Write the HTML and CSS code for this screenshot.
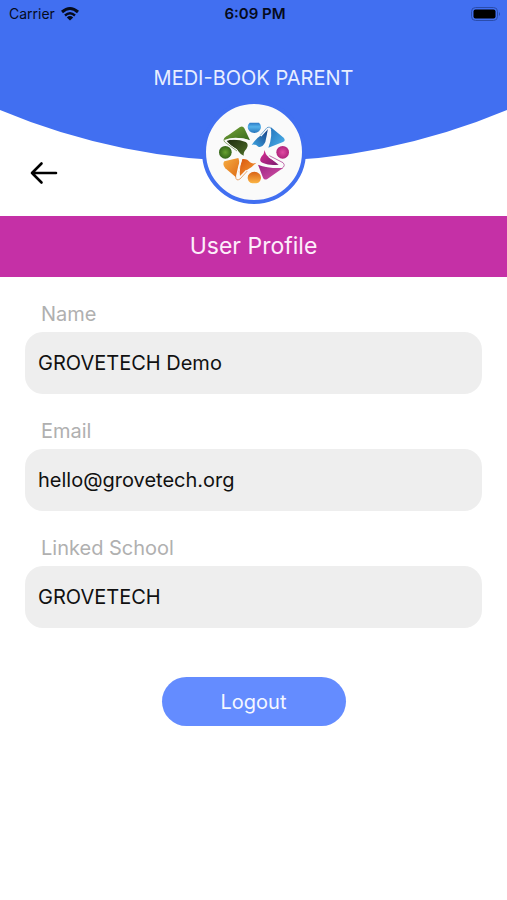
FILE: index.html
```
<!DOCTYPE html>
<html lang="en">
<head>
  <meta charset="UTF-8">
  <meta name="viewport" content="width=device-width, initial-scale=1.0">
  <title>User Profile</title>
  <link rel="stylesheet" href="styles.css">
</head>
<body>
  <header class="header">
    <svg class="curve" viewBox="0 0 507 161" preserveAspectRatio="none" aria-hidden="true">
      <path d="M0 0H507V110A655 655 0 0 1 0 110Z" fill="#416ff1"/>
    </svg>

    <div class="status-bar">
      <div class="carrier">
        <span>Carrier</span>
        <svg width="20" height="16" viewBox="0 0 20 16" aria-hidden="true">
          <g fill="none" stroke="#050b1c" stroke-width="3">
            <path d="M2 6Q10 -1 18 6"/>
            <path d="M5 9.5Q10 5 15 9.5" stroke-width="2.4"/>
          </g>
          <path d="M10 14.5L6.8 11.4Q10 8.8 13.2 11.4Z" fill="#050b1c"/>
        </svg>
      </div>
      <div class="time">6:09 PM</div>
      <svg class="battery" width="30" height="14" viewBox="0 0 30 14" aria-hidden="true">
        <rect x="0.5" y="0.5" width="26" height="13" rx="4" fill="none" stroke="#2a4cab"/>
        <rect x="2.5" y="2.5" width="22" height="9" rx="2" fill="#000"/>
        <path d="M28 5Q30 7 28 9Z" fill="#2a4cab"/>
      </svg>
    </div>

    <div class="app-name">MEDI-BOOK PARENT</div>

    <div class="nav-row">
      <button class="back" type="button" aria-label="Back">
        <svg width="28" height="24" viewBox="0 0 28 24" aria-hidden="true">
          <path d="M26 12H2M11.5 2.5L2 12L11.5 21.5" fill="none" stroke="#000" stroke-width="2.6" stroke-linecap="round" stroke-linejoin="round"/>
        </svg>
      </button>
      <div class="logo">
        <svg width="96" height="96" viewBox="36 35 288 288" role="img" aria-label="School logo">
          <defs>
            <linearGradient id="green" x1="0" y1="0" x2="1" y2="1">
              <stop offset="0" stop-color="#7aa63a"/>
              <stop offset="1" stop-color="#34691a"/>
            </linearGradient>
            <linearGradient id="darkGreen" x1="0" y1="0" x2="1" y2="1">
              <stop offset="0" stop-color="#1d2a0d"/>
              <stop offset="1" stop-color="#4f6f2a"/>
            </linearGradient>
            <linearGradient id="blue" x1="0" y1="0" x2="1" y2="1">
              <stop offset="0" stop-color="#1f6fb8"/>
              <stop offset="1" stop-color="#4fb4ec"/>
            </linearGradient>
            <linearGradient id="darkBlue" x1="1" y1="0" x2="0" y2="1">
              <stop offset="0" stop-color="#143a80"/>
              <stop offset="1" stop-color="#3fa9e6"/>
            </linearGradient>
            <linearGradient id="pink" x1="0" y1="0" x2="1" y2="1">
              <stop offset="0" stop-color="#9c2183"/>
              <stop offset="1" stop-color="#d355a6"/>
            </linearGradient>
            <linearGradient id="darkPink" x1="0" y1="0" x2="1" y2="1">
              <stop offset="0" stop-color="#dd2c93"/>
              <stop offset="1" stop-color="#7c1d70"/>
            </linearGradient>
            <linearGradient id="orange" x1="0" y1="0" x2="1" y2="1">
              <stop offset="0" stop-color="#f6ad42"/>
              <stop offset="1" stop-color="#de6a14"/>
            </linearGradient>
            <linearGradient id="darkOrange" x1="0" y1="0" x2="1" y2="1">
              <stop offset="0" stop-color="#d9560d"/>
              <stop offset="1" stop-color="#f7a13a"/>
            </linearGradient>
            <linearGradient id="blueHead" x1="0" y1="0" x2="0" y2="1">
              <stop offset="0" stop-color="#2b78c4"/>
              <stop offset="0.4" stop-color="#55b2ea"/>
              <stop offset="1" stop-color="#2876bd"/>
            </linearGradient>
            <linearGradient id="orangeHead" x1="0" y1="0" x2="0" y2="1">
              <stop offset="0" stop-color="#da6417"/>
              <stop offset="1" stop-color="#fbb545"/>
            </linearGradient>
            <radialGradient id="greenHead">
              <stop offset="0" stop-color="#69a331"/>
              <stop offset="1" stop-color="#35661a"/>
            </radialGradient>
            <radialGradient id="pinkHead">
              <stop offset="0" stop-color="#e04ba2"/>
              <stop offset="1" stop-color="#b0247c"/>
            </radialGradient>
          </defs>

          <!-- heads -->
          <path d="M167 91H195A20 18 0 1 1 167 91Z" fill="url(#blueHead)"/>
          <circle cx="94" cy="180" r="19" fill="url(#greenHead)"/>
          <circle cx="266" cy="180" r="19" fill="url(#pinkHead)"/>
          <path d="M169 271A20 18 0 1 1 193 271Q181 275 169 271Z" fill="url(#orangeHead)"/>

          <!-- green -->
          <path d="M92 136L138 104Q147 100 151 108L168 144Q132 130 94 145Q88 142 92 136Z" fill="url(#green)"/>
          <path d="M96 144Q130 138 155 149Q166 156 157 170Q148 178 149 190Q139 186 135 179Q128 168 112 161Z" fill="url(#darkGreen)"/>
          <path d="M92 145Q126 131 168 147M92 148L130 176" fill="none" stroke="#fafafa" stroke-width="5"/>
          <path d="M100 131Q85 140 92 149L129 176" fill="none" stroke="#5d8336" stroke-width="2"/>

          <!-- blue -->
          <path d="M229 103L269 136Q276 144 267 149L223 166Q237 129 229 103Z" fill="url(#blue)"/>
          <path d="M222 108Q219 127 214 149Q205 167 193 163Q182 154 173 158Q184 140 202 128Z" fill="url(#darkBlue)"/>
          <path d="M200 131L222 107Q229 103 229 112Q225 142 213 164" fill="none" stroke="#fafafa" stroke-width="5"/>
          <path d="M199 129L219 106Q227 100 232 110" fill="none" stroke="#2d7bbd" stroke-width="2"/>

          <!-- orange -->
          <path d="M91 207L133 197Q140 217 134 237L126 255L94 228Q84 216 91 207Z" fill="url(#orange)"/>
          <path d="M145 200Q161 199 168 210Q176 216 187 211Q177 223 160 232L138 252Q135 226 145 200Z" fill="url(#darkOrange)"/>
          <path d="M143 197Q134 221 129 250Q129 260 138 255L158 234" fill="none" stroke="#fafafa" stroke-width="5"/>
          <path d="M125 253Q126 268 138 260L160 236" fill="none" stroke="#dc7827" stroke-width="2"/>

          <!-- pink -->
          <path d="M192 217Q222 229 267 227L220 260Q211 265 207 256Z" fill="url(#pink)"/>
          <path d="M212 173Q214 187 223 193L254 217Q225 221 207 212Q193 207 202 193Q211 185 212 173Z" fill="url(#darkPink)"/>
          <path d="M225 193L262 214Q268 221 256 221Q224 224 193 214" fill="none" stroke="#fafafa" stroke-width="5"/>
          <path d="M226 190L267 211Q276 220 263 229" fill="none" stroke="#a52a86" stroke-width="2"/>
        </svg>
      </div>
    </div>
  </header>

  <main>
    <h1 class="banner">User Profile</h1>

    <form class="profile">
      <div class="field">
        <label for="name">Name</label>
        <input id="name" type="text" value="GROVETECH Demo" readonly>
      </div>
      <div class="field">
        <label for="email">Email</label>
        <input id="email" type="email" value="hello@grovetech.org" readonly>
      </div>
      <div class="field">
        <label for="school">Linked School</label>
        <input id="school" type="text" value="GROVETECH" readonly>
      </div>
      <button class="logout" type="button">Logout</button>
    </form>
  </main>
</body>
</html>
```

FILE: styles.css
```
* {
  box-sizing: border-box;
}
body {
  margin: 0;
  background-color: #fff;
  color: #111;
  font-family: Inter, "Liberation Sans", sans-serif;
}
button,
input {
  font-family: inherit;
  border: none;
}
.header {
  position: relative;
  padding-bottom: 12px;
}
.curve {
  position: absolute;
  top: 0;
  left: 0;
  width: 100%;
  height: 161px;
  z-index: -1;
}
.status-bar {
  display: grid;
  grid-template-columns: 1fr auto 1fr;
  align-items: center;
  height: 27px;
  padding: 0 6px 0 9px;
  font-size: 14px;
  color: #050b1c;
}
.carrier {
  display: flex;
  align-items: center;
  gap: 5px;
}
.time {
  font-weight: 600;
  font-size: 15px;
}
.battery {
  justify-self: end;
}
.app-name {
  padding-top: 37px;
  line-height: 28px;
  font-size: 20px;
  text-align: center;
  color: #e8eeff;
}
.nav-row {
  display: grid;
  grid-template-columns: 1fr auto 1fr;
  margin-top: 8px;
}
.back {
  justify-self: start;
  align-self: end;
  display: flex;
  margin: 0 0 11px 22px;
  padding: 8px;
  background: none;
  cursor: pointer;
}
.logo {
  width: 104px;
  height: 104px;
  border: 4px solid #416ff1;
  border-radius: 50%;
  background-color: #fafafa;
}
.logo svg {
  display: block;
}
.banner {
  margin: 0;
  padding: 16px;
  line-height: 29px;
  font-size: 23px;
  font-weight: 400;
  text-align: center;
  color: #fdeefa;
  background-color: #c530a6;
}
.profile {
  display: flex;
  flex-direction: column;
  gap: 24px;
  padding: 23px 25px;
}
.field label {
  display: block;
  padding-left: 16px;
  line-height: 28px;
  margin-bottom: 4px;
  font-size: 20px;
  color: #b0b0b0;
}
.field input {
  display: block;
  width: 100%;
  height: 62px;
  padding: 0 13px;
  border-radius: 18px;
  background-color: #eee;
  font-size: 20px;
  color: #111;
  outline: none;
}
.field + .field {
  margin-top: -1px;
}
.logout {
  align-self: center;
  width: 36%;
  min-width: 184px;
  height: 49px;
  margin-top: 25px;
  border-radius: 25px;
  background-color: #648cff;
  font-size: 20px;
  color: #f4f7ff;
  cursor: pointer;
}
```
